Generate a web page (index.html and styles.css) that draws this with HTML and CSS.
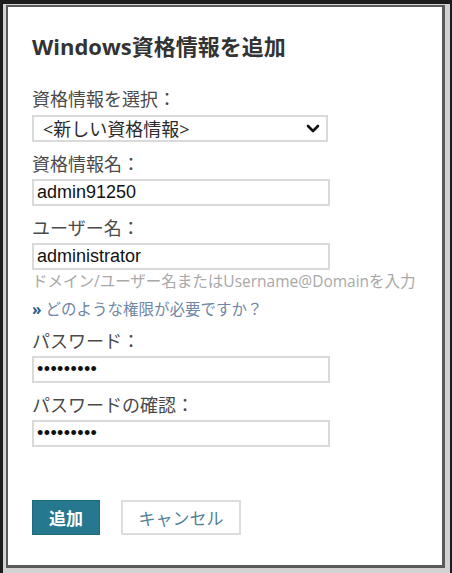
FILE: index.html
```html
<!DOCTYPE html>
<html lang="ja">
<head>
    <meta charset="UTF-8">
    <meta name="viewport" content="width=device-width, initial-scale=1.0">
    <title>Windows資格情報を追加</title>
    <link rel="stylesheet" href="styles.css">
</head>
<body>
    <div class="frame">
        <div class="dialog">
            <h1>Windows資格情報を追加</h1>

            <form id="formulario" class="cred-form">
                <div class="form-group">
                    <label for="credencial">資格情報を選択：</label>
                    <div class="select-wrap">
                        <select id="credencial" name="credencial">
                            <option>&lt;新しい資格情報&gt;</option>
                        </select>
                        <svg class="chevron" width="14" height="10" viewBox="0 0 14 10">
                            <path d="M2 2 L7 7 L12 2" fill="none" stroke="#111" stroke-width="2.6" stroke-linecap="round" stroke-linejoin="round"/>
                        </svg>
                    </div>
                </div>

                <div class="form-group">
                    <label for="nombre">資格情報名：</label>
                    <input type="text" id="nombre" name="nombre" value="admin91250">
                </div>

                <div class="form-group">
                    <label for="usuario">ユーザー名：</label>
                    <input type="text" id="usuario" name="usuario" value="administrator">
                    <p class="hint">ドメイン/ユーザー名またはUsername@Domainを入力</p>
                    <a class="help-link" href="#"><span class="raquo">»</span> どのような権限が必要ですか？</a>
                </div>

                <div class="form-group">
                    <label for="clave">パスワード：</label>
                    <input type="password" id="clave" name="clave" value="123456789">
                </div>

                <div class="form-group">
                    <label for="clave2">パスワードの確認：</label>
                    <input type="password" id="clave2" name="clave2" value="123456789">
                </div>

                <div class="actions">
                    <button type="submit" class="btn btn-primary">追加</button>
                    <button type="button" class="btn btn-cancel">キャンセル</button>
                </div>
            </form>
        </div>
    </div>
</body>
</html>
```

FILE: styles.css
```css
:root {
    --title-color: #333333;
    --label-color: #4a4a4a;
    --hint-color: #a8a8a8;
    --link-color: #6f87a6;
    --primary-color: #26788f;
    --cancel-text: #4f8299;
    --field-border: #dadada;
}

* {
    box-sizing: border-box;
    margin: 0;
    padding: 0;
}

body {
    background-color: #1c1c1c;
    padding: 4px 2px 3px 3px;
    font-family: 'Open Sans', 'Noto Sans CJK JP', sans-serif;
}

/* marco gris de la ventana */
.frame {
    border-style: solid;
    border-color: #d2d2d2;
    border-width: 1px 5px 5px 3px;
}

.dialog {
    background-color: #ffffff;
    border-style: solid;
    border-color: #5a5a5a;
    border-width: 2px 3px 3px 2px;
    height: 563px;
    padding: 25px 24px 0 24px;
}

h1 {
    color: var(--title-color);
    font-size: 22px;
    font-weight: 700;
    line-height: 28px;
    margin-bottom: 27px;
}

.form-group {
    margin-bottom: 10px;
}

label {
    display: block;
    color: var(--label-color);
    font-size: 18px;
    line-height: 24px;
    margin-bottom: 3px;
}

.form-group:first-child label {
    margin-bottom: 4px;
}

input[type="text"],
input[type="password"],
select {
    display: block;
    width: 298px;
    height: 27px;
    border: 2px solid var(--field-border);
    border-radius: 0;
    background-color: #ffffff;
    padding: 0 3px;
    font-family: 'Liberation Sans', Arial, sans-serif;
    font-size: 18px;
    color: #111111;
    outline: none;
}

input[type="password"] {
    letter-spacing: 0.4px;
}

.select-wrap {
    position: relative;
    width: 296px;
}

select {
    width: 296px;
    appearance: none;
    -webkit-appearance: none;
    font-family: 'Open Sans', 'Noto Sans CJK JP', sans-serif;
    padding-left: 9px;
    color: #2a2a2a;
}

.chevron {
    position: absolute;
    right: 8px;
    top: 9px;
    pointer-events: none;
}

.hint {
    color: var(--hint-color);
    font-size: 15.5px;
    line-height: 20px;
    margin-top: 1px;
    white-space: nowrap;
}

.help-link {
    display: block;
    color: var(--link-color);
    font-size: 15.5px;
    line-height: 20px;
    margin-top: 8px;
    text-decoration: none;
}

.raquo {
    color: #2f5f8f;
    font-weight: 700;
}

.actions {
    display: flex;
    gap: 21px;
    margin-top: 53px;
}

.btn {
    height: 35px;
    font-family: 'Open Sans', 'Noto Sans CJK JP', sans-serif;
    font-size: 17px;
    cursor: pointer;
}

.btn-primary {
    width: 68px;
    background-color: var(--primary-color);
    border: 1px solid #1f6a80;
    color: #ffffff;
    font-weight: 700;
}

.btn-cancel {
    width: 120px;
    background-color: #ffffff;
    border: 2px solid #dddddd;
    color: var(--cancel-text);
}
```
